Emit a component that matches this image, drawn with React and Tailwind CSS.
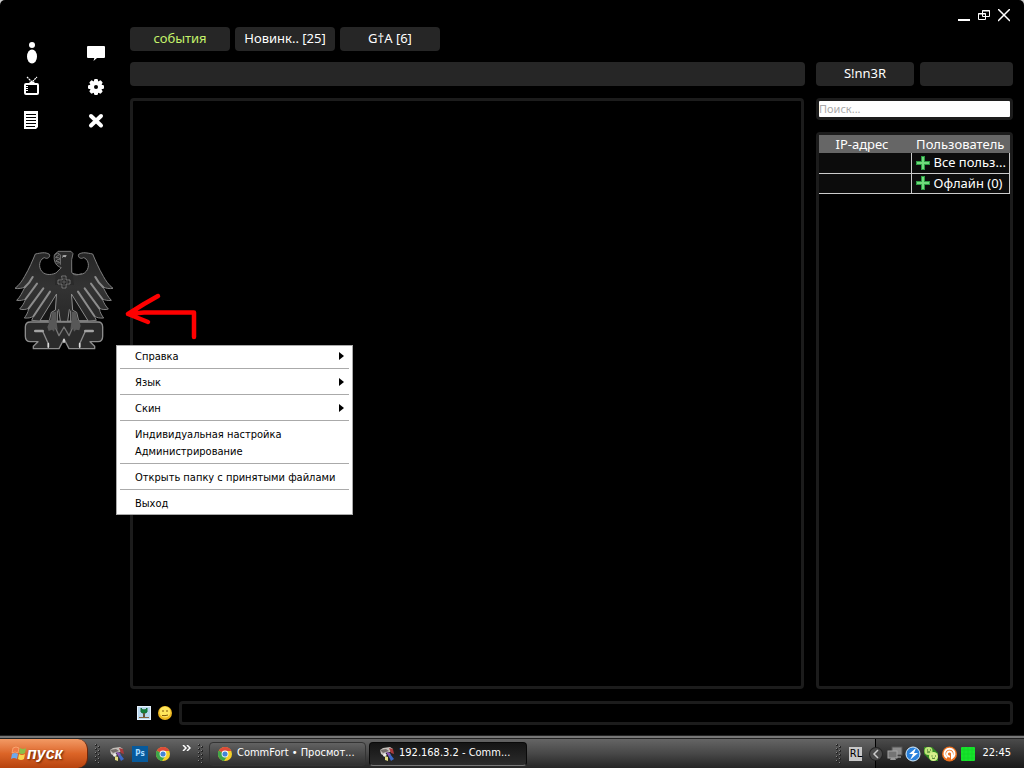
import { useState } from 'react';

const tabs = [
  { id: 'events', label: 'события' },
  { id: 'news', label: 'Новинк.. [25]' },
  { id: 'gta', label: 'G†A [6]' },
];

const menuGroups = [
  [{ label: 'Справка', submenu: true }],
  [{ label: 'Язык', submenu: true }],
  [{ label: 'Скин', submenu: true }],
  [{ label: 'Индивидуальная настройка' }, { label: 'Администрирование' }],
  [{ label: 'Открыть папку с принятыми файлами' }],
  [{ label: 'Выход' }],
];

const userGroups = ['Все польз...', 'Офлайн (0)'];

const UserIcon = () => (
  <svg width="20" height="24" viewBox="0 0 20 24" fill="#fff">
    <circle cx="10" cy="4" r="3" />
    <ellipse cx="10" cy="15.5" rx="5" ry="7" />
  </svg>
);

const ChatIcon = () => (
  <svg width="20" height="24" viewBox="0 0 20 24" fill="#fff">
    <path d="M2 5h16a1 1 0 0 1 1 1v10a1 1 0 0 1-1 1h-7l-3.5 3 .8-3H2a1 1 0 0 1-1-1V6a1 1 0 0 1 1-1z" />
  </svg>
);

const TvIcon = () => (
  <svg width="20" height="24" viewBox="0 0 20 24" fill="none" stroke="#fff">
    <path d="M5 2l5 5 5-5" strokeWidth="1.2" strokeDasharray="2 .6" />
    <path d="M7.5 7.5h5" strokeWidth="1.5" />
    <rect x="3" y="9" width="13" height="10" rx="1" strokeWidth="2" />
    <path d="M5 11v6" strokeWidth="2" strokeDasharray="1 1" />
  </svg>
);

const GearIcon = () => (
  <svg width="20" height="24" viewBox="0 0 20 24">
    <g fill="#fff">
      <circle cx="10" cy="12" r="6.3" />
      {[0, 45, 90, 135].map((angle) => (
        <rect key={angle} x="8" y="4" width="4" height="16" rx="1.2" transform={`rotate(${angle} 10 12)`} />
      ))}
    </g>
    <circle cx="10" cy="12" r="2" fill="#000" />
  </svg>
);

const NotesIcon = () => (
  <svg width="20" height="24" viewBox="0 0 20 24">
    <path d="M2 2h14v16l-2 2H2z" fill="#fff" />
    <path d="M4 5.5h10M4 8.5h10M4 11.5h10M4 14.5h10M4 17.5h9" stroke="#000" />
  </svg>
);

const CrossIcon = () => (
  <svg width="20" height="24" viewBox="0 0 20 24" stroke="#fff" strokeWidth="4" strokeLinecap="round">
    <path d="M5 7l10 9.5M15 7L5 16.5" />
  </svg>
);

const tools = [
  { label: 'Профиль', Icon: UserIcon },
  { label: 'Сообщения', Icon: ChatIcon },
  { label: 'Каналы', Icon: TvIcon },
  { label: 'Настройки', Icon: GearIcon },
  { label: 'Журнал', Icon: NotesIcon },
  { label: 'Закрыть', Icon: CrossIcon },
];

const EagleLogo = () => (
  <svg width="102" height="101" viewBox="39 45 306 303" strokeLinejoin="round" strokeLinecap="round">
    <defs>
      <linearGradient id="eagle" x1="0" y1="0" x2="0" y2="1">
        <stop offset="0" stopColor="#262626" />
        <stop offset="0.5" stopColor="#333" />
        <stop offset="1" stopColor="#282828" />
      </linearGradient>
    </defs>
    {/* One wing is drawn, the other is its mirror */}
    {[false, true].map((mirrored) => (
      <g key={String(mirrored)} transform={mirrored ? 'translate(384 0) scale(-1 1)' : undefined}>
        <path
          d="M193 120L168 114C150 122 130 120 122 104C114 88 122 70 134 68C142 74 152 66 148 58C136 50 122 54 106 57C98 76 88 100 74 124C66 138 58 150 45 160C56 162 66 160 75 156C66 174 60 186 50 196C60 198 70 195 77 192C72 206 66 214 59 222C68 225 77 224 86 220C84 234 78 242 73 249C86 250 94 248 101 243L95 256L120 258L193 259"
          fill="url(#eagle)"
          stroke="#808080"
          strokeWidth="3"
        />
        <g stroke="#8c8c8c" strokeWidth="6" fill="none">
          <path d="M98 126C92 138 84 148 75 156" />
          <path d="M111 146L77 192" />
          <path d="M130 160L86 220" />
          <path d="M150 170L101 243" />
        </g>
        {/* Opening between the tail and the leg */}
        <path d="M169 178L120 257H148L154 232L165 226z" fill="#161616" stroke="#8c8c8c" strokeWidth="3" />
        <path d="M176 224L181 258H172V228" fill="#111" stroke="#8c8c8c" strokeWidth="3" />
      </g>
    ))}
    <path d="M167 114L183 98C170 94 161 82 163 60L174 49H213L219 56L215 74L217 110L222 150H165z" fill="#2a2a2a" />
    <path d="M168 114L184 98C170 94 160 82 163 60L174 49H213L219 56L215 74V112C220 122 234 121 244 116" fill="none" stroke="#777" strokeWidth="3" />
    <path d="M165 58q9-8 14 0q-8 4-12 10q10-2 14 4q-10 0-14 7q9-2 12 4q-8 0-10 4M181 60v28M187 68l6-6" fill="none" stroke="#777" strokeWidth="3" />
    <path d="M188 61l12-1-3 7-10-2z" fill="#aaa" />
    <path
      d="M186 123h12v12h12v12h-12v12h-12v-12h-12v-12h12z"
      fill="#222"
      stroke="#999"
      strokeWidth="2"
    />
    <path d="M180 141h24M192 129v24" stroke="#777" strokeWidth="2" />
    {/* Plaque the eagle stands on */}
    <path
      d="M91 261H294Q308 261 308 276V304Q308 320 294 320H270L284 334V341H207L192 312L177 341H100V334L114 320H91Q76 320 76 304V276Q76 261 91 261z"
      fill="#2b2b2b"
      stroke="#8c8c8c"
      strokeWidth="4"
    />
    <path d="M106 289H128L145 326V340M278 289H256L239 326V340" fill="none" stroke="#8c8c8c" strokeWidth="4" />
    <path d="M160 264L177 302L192 276L207 302L224 264" fill="none" stroke="#777" strokeWidth="4" />
    <path d="M106 288H128M256 288H278" stroke="#a3a3a3" strokeWidth="8" />
    <path d="M145 326v10M239 326v10M192 314v8" stroke="#ddd" strokeWidth="5" />
    {/* Talons */}
    <g fill="#585858">
      <path d="M156 232l12-2 2 32 3 22-8-4-3 10-6-6-10 4-4-12 5-12-2-8 8-2z" />
      <path d="M228 232l-12-2-2 32-3 22 8-4 3 10 6-6 10 2 4-14-4-14-6-4z" />
    </g>
  </svg>
);

const Plus = () => (
  <svg width="14" height="14" viewBox="0 0 14 14" className="shrink-0">
    <path d="M5 0h4v5h5v4H9v5H5V9H0V5h5z" fill="#2c9c43" />
    <path d="M6 1h2v5h5v2H8v5H6V8H1V6h5z" fill="#70dc7c" />
  </svg>
);

const ChromeIcon = () => (
  <svg width="16" height="16" viewBox="0 0 16 16" className="shrink-0">
    <circle cx="8" cy="8" r="7" fill="#f5cf28" />
    <path d="M8 8L1.9 4.5A7 7 0 0 0 7 14.9L10.6 9.5z" fill="#3da64a" />
    <path d="M8 8L1.9 4.5A7 7 0 0 1 14.4 5H8z" fill="#dd4b3a" />
    <circle cx="8" cy="8" r="3.4" fill="#fff" />
    <circle cx="8" cy="8" r="2.6" fill="#4384d6" />
  </svg>
);

const CommFortIcon = () => (
  <svg width="16" height="16" viewBox="0 0 16 16" className="shrink-0">
    <path d="M1 4l3-2 7-1 3 2-3 3-4 1-2 3-3-2z" fill="#c4bfb9" />
    <path d="M1 4l6-1 3 2-6 2z" fill="#756e6a" />
    <path d="M10 2l4 1 1 5-3-1z" fill="#a83a3a" />
    <path d="M7 6l4 1 2 5-3-1z" fill="#8b55b5" />
    <path d="M11 8l4 5-3 2-2-4z" fill="#3b69c7" />
    <path d="M6 10l3 1v4l-3-1z" fill="#e4dd80" />
    <path d="M4 9l2-2 2 2-3 2z" fill="#eee" />
  </svg>
);

const FlagIcon = () => (
  <svg width="17" height="17" viewBox="0 0 17 17">
    <path d="M3 3q3-2 6 0l-1 5q-3-2-6 0z" fill="#ef7945" stroke="#ffc08c" strokeWidth=".6" />
    <path d="M10 3q3 2 6 0l-1 5q-3 2-6 0z" fill="#8bbf48" />
    <path d="M2 9q3-2 6 0l-1 5q-3-2-6 0z" fill="#6fa9ea" />
    <path d="M9 9q3 2 6 0l-1 5q-3 2-6 0z" fill="#fbd34c" />
  </svg>
);

const Grip = () => (
  <svg width="7" height="21" viewBox="0 0 7 21" className="shrink-0">
    {[1, 5, 9, 13, 17].map((y) => (
      <g key={y}>
        <rect x="1" y={y} width="2" height="2" fill="#262626" />
        <rect x="1" y={y} width="1" height="1" fill="#888" />
        <rect x="4" y={y + 2} width="2" height="2" fill="#262626" />
        <rect x="4" y={y + 2} width="1" height="1" fill="#888" />
      </g>
    ))}
  </svg>
);

const TrayIcons = () => (
  <>
    <svg width="16" height="16" viewBox="0 0 16 16">
      <rect x="5" y="1" width="10" height="8" fill="#8b8b8b" stroke="#555" />
      <path d="M10 10h4v2h-5" fill="#777" />
      <rect x="1" y="5" width="9" height="7" fill="#747474" stroke="#a5a5a5" />
      <path d="M3 14h6l-1-2H4z" fill="#999" />
    </svg>
    <svg width="16" height="16" viewBox="0 0 16 16">
      <circle cx="8" cy="8" r="7" fill="#2a82dd" stroke="#d9efff" />
      <path d="M11 2L4 8h4l-3 6 8-7H9z" fill="#fff" />
    </svg>
    <svg width="16" height="16" viewBox="0 0 16 16">
      <path d="M1 1h8l6 6v8H8L1 8z" fill="#348b24" />
      <circle cx="5.5" cy="5" r="4" fill="#bfe579" />
      <circle cx="10.5" cy="10.5" r="4.5" fill="#d8f08b" />
      <path d="M4 4h1M7 4h1M4 6h3M8.5 10h1M12 10h1M9 12q1.5 1 3 0" stroke="#2b691c" fill="none" />
    </svg>
    <svg width="17" height="16" viewBox="0 0 17 16">
      <circle cx="8.5" cy="8" r="7.5" fill="#ee711e" />
      <path d="M6 12A5 5 0 1 1 11 12V8a2.5 2.5 0 1 0-2 2.4" fill="none" stroke="#fff" strokeWidth="2" />
    </svg>
    <svg width="16" height="16" viewBox="0 0 16 16">
      <rect x="1" y="1" width="14" height="14" rx="1" fill="#16e52b" />
      <path d="M4 1v14M8 1v14M12 1v14M1 4h14M1 8h14M1 12h14" stroke="#10cf24" strokeWidth=".5" />
    </svg>
  </>
);

const ContextMenu = () => (
  <div
    role="menu"
    className="absolute left-[116px] top-[345px] w-[237px] border border-[#aaa] bg-white px-[3px] pt-px pb-[3px] font-['DejaVu_Sans_Condensed','DejaVu_Sans',sans-serif] text-[11px] text-black"
  >
    {menuGroups.map((group, index) => (
      <div key={index}>
        {index > 0 && <hr className="my-1 border-[#aaa]" />}
        {group.map((item) => (
          <button
            key={item.label}
            role="menuitem"
            className="flex h-[17px] w-full items-center justify-between whitespace-nowrap pr-[5px] pl-[15px] text-left hover:bg-gray-200"
          >
            <span className="pt-[3px]">{item.label}</span>
            {item.submenu && (
              <svg width="5" height="8" viewBox="0 0 5 8">
                <path d="M0 0l5 4-5 4z" />
              </svg>
            )}
          </button>
        ))}
      </div>
    ))}
  </div>
);

const Taskbar = () => (
  <footer className="flex h-[33px] shrink-0 flex-col bg-[#222] font-['DejaVu_Sans_Condensed','DejaVu_Sans',sans-serif] text-[11px] text-white">
    <div className="h-[4px] border-y border-[#222] bg-[#777]" />
    <div className="flex flex-1 items-center bg-linear-to-b from-[#656565] via-[#484848] to-[#262626]">
      <button className="flex h-full w-[88px] items-center rounded-r-[10px] border-r border-[#6b260c] bg-linear-to-b from-[#f29a64] via-[#dc6527] to-[#b7430e] pl-[10px] font-['Liberation_Sans',sans-serif] text-[16px] font-bold italic leading-none [text-shadow:1px_1px_2px_#5b2100]">
        <FlagIcon />
        пуск
      </button>
      <div className="flex items-center pl-[6px]">
        <Grip />
        <div className="flex items-center gap-[7px] pl-[8px]">
          <button aria-label="CommFort"><CommFortIcon /></button>
          <button aria-label="Photoshop" className="h-4 w-4 bg-[#075a9c] text-[8px] font-bold leading-none text-[#a9dcff]">Ps</button>
          <button aria-label="Chrome"><ChromeIcon /></button>
        </div>
        <button aria-label="Ещё" className="ml-[11px] pb-3">
          <svg width="9" height="6" viewBox="0 0 9 6" fill="none" stroke="#fff" strokeWidth="1.5">
            <path d="M1 0l3 3-3 3M5 0l3 3-3 3" />
          </svg>
        </button>
        <div className="ml-[6px]"><Grip /></div>
      </div>
      <div className="ml-[5px] flex gap-[3px]">
        <button className="flex h-6 w-[157px] items-center gap-1 rounded-sm border border-[#333] bg-linear-to-b from-[#626262] to-[#303030] pl-[7px] whitespace-nowrap">
          <ChromeIcon />
          CommFort • Просмот...
        </button>
        <button className="flex h-6 w-[158px] items-center gap-1 rounded-sm border border-[#090909] border-b-[#777] bg-linear-to-b from-[#151515] to-[#2c2c2c] pl-[9px] whitespace-nowrap">
          <CommFortIcon />
          192.168.3.2 - Comm...
        </button>
      </div>
      <div className="ml-auto flex h-full items-center">
        <Grip />
        <button className="ml-[7px] h-[14px] w-[13px] bg-[#c7c7c7] text-center leading-[14px] text-black">RL</button>
        <div className="ml-[13px] flex h-full items-center gap-[2px] border-l border-black bg-linear-to-b from-[#4b4b4b] to-[#191919] pr-[13px]">
          <button aria-label="Скрыть значки" className="-ml-[7px] mr-[2px]">
            <svg width="14" height="14" viewBox="0 0 14 14">
              <circle cx="7" cy="7" r="7" fill="#242424" />
              <circle cx="7" cy="7" r="6" fill="#4a4a4a" />
              <path d="M9 3L5 7l4 4" fill="none" stroke="#ccc" strokeWidth="1.5" />
            </svg>
          </button>
          <TrayIcons />
          <span className="ml-[4px]">22:45</span>
        </div>
      </div>
    </div>
  </footer>
);

const App = () => {
  const [activeTab, setActiveTab] = useState('events');
  const [search, setSearch] = useState('');

  return (
    <div className="relative flex min-h-screen flex-col bg-[#ccc] font-['Noto_Sans',sans-serif] text-[13px] text-white">
      <div className="flex flex-1 rounded-t-[5px] bg-black">
        <aside className="w-[130px] shrink-0">
          <div className="grid w-[128px] grid-cols-2 gap-y-[10px] pt-[41px]">
            {tools.map(({ label, Icon }) => (
              <button key={label} aria-label={label} className="flex justify-center">
                <Icon />
              </button>
            ))}
          </div>
          <div className="mt-[117px] pl-[13px]">
            <EagleLogo />
          </div>
        </aside>

        <div className="flex min-w-0 flex-1 flex-col pr-[11px] pb-[10px]">
          <header className="flex h-[51px] justify-between">
            <nav className="flex items-end gap-[5px]">
              {tabs.map((tab) => (
                <button
                  key={tab.id}
                  onClick={() => setActiveTab(tab.id)}
                  className={`h-6 w-[100px] rounded-[4px] bg-[#262626] ${activeTab === tab.id ? 'text-[#c4f26b]' : ''}`}
                >
                  {tab.label}
                </button>
              ))}
            </nav>
            <div className="mt-[9px] flex h-[13px] gap-2 pr-[3px]">
              <button aria-label="Свернуть">
                <svg width="12" height="13" viewBox="0 0 12 13"><path d="M0 10h12v2H0z" fill="#fff" /></svg>
              </button>
              <button aria-label="Восстановить">
                <svg width="12" height="13" viewBox="0 0 12 13" fill="none" stroke="#fff">
                  <path d="M4.5 1.5h7v6h-7zM.5 4.500h7v6h-7zM4 2h8M0 5h8" />
                </svg>
              </button>
              <button aria-label="Закрыть окно">
                <svg width="12" height="13" viewBox="0 0 12 13" stroke="#fff" strokeWidth="1.5"><path d="M0 0l12 12M12 0L0 12" /></svg>
              </button>
            </div>
          </header>

          <div className="mt-[11px] flex flex-1 gap-[11px]">
            <main className="flex min-w-0 flex-1 flex-col gap-3">
              <div className="h-6 rounded-[4px] bg-[#262626]" />
              <section className="mr-px flex-1 rounded-[4px] border-3 border-[#1c1c1c]" />
            </main>
            <aside className="flex w-[197px] flex-col">
              <div className="flex gap-[6px]">
                <button className="h-6 w-[98px] rounded-[4px] bg-[#262626]">S!nn3R</button>
                <button aria-label="Статус" className="h-6 flex-1 rounded-[4px] bg-[#262626]" />
              </div>
              <input
                aria-label="Поиск"
                placeholder="Поиск..."
                value={search}
                onChange={(e) => setSearch(e.target.value)}
                className="mt-3 h-[22px] w-full rounded-[4px] border-3 border-[#1c1c1c] bg-white pb-[2px] text-[11px] leading-none text-black outline-none placeholder:text-[#aaa]"
              />
              <div className="mt-3 flex-1 rounded-[4px] border-3 border-[#1c1c1c]">
                <table className="w-full table-fixed border-collapse">
                  <thead>
                    <tr className="h-[18px] bg-[#666] leading-[18px]">
                      <th className="w-[92px] p-0 pr-[6px] font-normal">IP-адрес</th>
                      <th className="p-0 font-normal">Пользователь</th>
                    </tr>
                  </thead>
                  <tbody>
                    {userGroups.map((name) => (
                      <tr key={name} className="h-5 border-b border-[#ccc] bg-[#0c0c0c] leading-[19px]">
                        <td className="border-r border-[#ccc] p-0" />
                        <td className="border-r border-[#ccc] p-0">
                          <span className="flex items-center gap-1 whitespace-nowrap pl-[4px]">
                            <Plus />
                            {name}
                          </span>
                        </td>
                      </tr>
                    ))}
                  </tbody>
                </table>
              </div>
            </aside>
          </div>

          <div className="mt-3 flex h-6 items-center pl-[7px]">
            <button aria-label="Картинка">
              <svg width="14" height="14" viewBox="0 0 14 14">
                <rect width="14" height="14" fill="#e8f4ff" />
                <rect x="1" y="1" width="12" height="12" fill="#b9d8ef" />
                <path d="M4 2v4q3 3 6 0V2q-3 4-6 0z" fill="#12823b" stroke="#17703a" />
                <path d="M7 7v4" stroke="#66583a" strokeWidth="2" />
                <path d="M2 11h10v1H2z" fill="#86643c" />
              </svg>
            </button>
            <button aria-label="Смайлик" className="ml-[7px]">
              <svg width="14" height="14" viewBox="0 0 14 14">
                <circle cx="7" cy="7" r="7" fill="#ecb51f" />
                <circle cx="7" cy="6" r="5.500" fill="#ffe65c" />
                <path d="M5 4v2M9 4v2M4 9.500q3 .5 6-.5" fill="none" stroke="#80550a" />
              </svg>
            </button>
            <input aria-label="Сообщение" className="ml-[7px] h-6 min-w-0 flex-1 rounded-[4px] border-3 border-[#1c1c1c] bg-black px-1 outline-none" />
          </div>
        </div>
      </div>

      <Taskbar />

      <svg className="absolute left-[124px] top-[292px]" width="76" height="50" viewBox="0 0 76 50" fill="none" stroke="#f00" strokeWidth="4.5" strokeLinecap="round" strokeLinejoin="round">
        <path d="M34 4L20 12L4 22L24 30M4 22L20 20.500H70V45" />
      </svg>
      <ContextMenu />
    </div>
  );
};

export default App;
